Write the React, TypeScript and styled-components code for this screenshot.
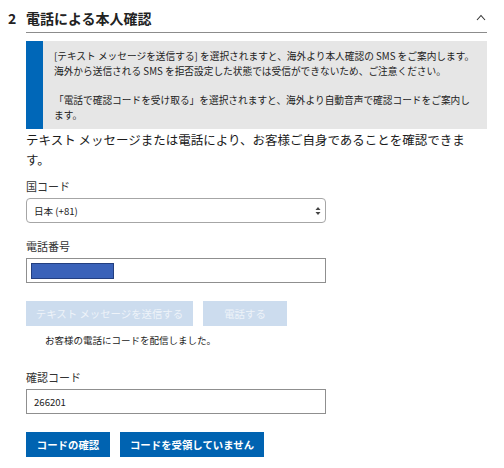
import React from "react";
import styled, { createGlobalStyle } from "styled-components";

const Global = createGlobalStyle`
  html, body { margin: 0; padding: 0; background: #fff; }
  body { font-family: "Noto Sans CJK JP", "Noto Sans", sans-serif; color: #222; }
  * { box-sizing: border-box; }
`;

const Page = styled.div`
  width: 504px;
  padding: 0 17px 0 0;
`;

const Header = styled.div`
  display: flex;
  align-items: stretch;
  height: 33px;
`;

const StepNum = styled.div`
  width: 26px;
  padding: 8px 0 0 8px;
  font-size: 14px;
  font-weight: 700;
  line-height: 20px;
`;

const TitleBar = styled.div`
  flex: 1;
  display: flex;
  align-items: flex-start;
  justify-content: space-between;
  border-bottom: 1px solid #8c8c8c;
  padding-top: 8px;
`;

const Title = styled.h2`
  margin: 0;
  font-size: 14px;
  font-weight: 700;
  line-height: 20px;
`;

const Chevron = styled.svg`
  margin: 6px 1px 0 0;
`;

const Body = styled.div`
  padding: 8px 0 0 26px;
`;

const Notice = styled.div`
  display: flex;
  background: #e6e6e6;
  height: 88px;
`;

const NoticeBar = styled.div`
  width: 17px;
  background: #0067b8;
  flex: none;
`;

const NoticeText = styled.div`
  flex: 1;
  min-width: 0;
  padding: 8px 4px 0 11px;
  font-size: 9.7px;
  line-height: 14.7px;
  color: #222;
`;

const NoticeLine = styled.div<{ $gap?: boolean }>`
  white-space: nowrap;
  margin-top: ${(p) => (p.$gap ? "14.7px" : "0")};
`;

const Lead = styled.p`
  margin: 1px 0 0;
  font-size: 12.5px;
  line-height: 20px;
  color: #1b1b1b;
`;

const Label = styled.div<{ $top: number }>`
  margin-top: ${(p) => p.$top}px;
  font-size: 11px;
  line-height: 16px;
  color: #333;
`;

const SelectBox = styled.div`
  margin-top: 4px;
  width: 300px;
  height: 25px;
  border: 1px solid #a6a6a6;
  border-radius: 4px;
  display: flex;
  align-items: center;
  justify-content: space-between;
  padding: 0 4px 0 7px;
  font-size: 9.6px;
  color: #222;
`;

const TextBox = styled.div`
  margin-top: 4px;
  width: 300px;
  height: 25px;
  border: 1px solid #8f8f8f;
  display: flex;
  align-items: center;
  padding: 0 7px;
  font-size: 9.6px;
  color: #222;
`;

const Redact = styled.div`
  width: 83px;
  height: 16px;
  margin-left: -3px;
  background: #3a62b9;
  border: 1px solid #233f80;
`;

const ButtonRow = styled.div<{ $top: number }>`
  display: flex;
  gap: 10px;
  margin-top: ${(p) => p.$top}px;
`;

const Button = styled.button<{ $disabled?: boolean; $w: number }>`
  width: ${(p) => p.$w}px;
  height: 25px;
  border: none;
  padding: 0;
  margin: 0;
  font-family: inherit;
  font-size: 10.4px;
  font-weight: ${(p) => (p.$disabled ? 400 : 700)};
  background: ${(p) => (p.$disabled ? "#ccdcee" : "#0063b1")};
  color: ${(p) => (p.$disabled ? "#eef3f9" : "#fff")};
  cursor: ${(p) => (p.$disabled ? "default" : "pointer")};
`;

const Sent = styled.div`
  margin-top: 7px;
  padding-left: 19px;
  font-size: 9.5px;
  line-height: 14px;
  color: #222;
`;

export default function App() {
  return (
    <>
      <Global />
      <Page>
        <Header>
          <StepNum>2</StepNum>
          <TitleBar>
            <Title>電話による本人確認</Title>
            <Chevron width="10" height="7" viewBox="0 0 10 7">
              <polyline points="1,6 5,1.5 9,6" fill="none" stroke="#333" strokeWidth="1.1" />
            </Chevron>
          </TitleBar>
        </Header>
        <Body>
          <Notice>
            <NoticeBar />
            <NoticeText>
              <NoticeLine>[テキスト メッセージを送信する] を選択されますと、海外より本人確認の SMS をご案内します。</NoticeLine>
              <NoticeLine>海外から送信される SMS を拒否設定した状態では受信ができないため、ご注意ください。</NoticeLine>
              <NoticeLine $gap>「電話で確認コードを受け取る」を選択されますと、海外より自動音声で確認コードをご案内し</NoticeLine>
              <NoticeLine>ます。</NoticeLine>
            </NoticeText>
          </Notice>
          <Lead>
            テキスト メッセージまたは電話により、お客様ご自身であることを確認できま
            <br />
            す。
          </Lead>
          <Label $top={8}>国コード</Label>
          <SelectBox>
            <span>日本 (+81)</span>
            <svg width="6" height="10" viewBox="0 0 6 10">
              <polygon points="3,1 5.5,4 0.5,4" fill="#444" />
              <polygon points="3,9 5.5,6 0.5,6" fill="#444" />
            </svg>
          </SelectBox>
          <Label $top={15}>電話番号</Label>
          <TextBox>
            <Redact />
          </TextBox>
          <ButtonRow $top={18}>
            <Button $disabled $w={167}>テキスト メッセージを送信する</Button>
            <Button $disabled $w={84}>電話する</Button>
          </ButtonRow>
          <Sent>お客様の電話にコードを配信しました。</Sent>
          <Label $top={22}>確認コード</Label>
          <TextBox>266201</TextBox>
          <ButtonRow $top={18}>
            <Button $w={84}>コードの確認</Button>
            <Button $w={144}>コードを受領していません</Button>
          </ButtonRow>
        </Body>
      </Page>
    </>
  );
}
